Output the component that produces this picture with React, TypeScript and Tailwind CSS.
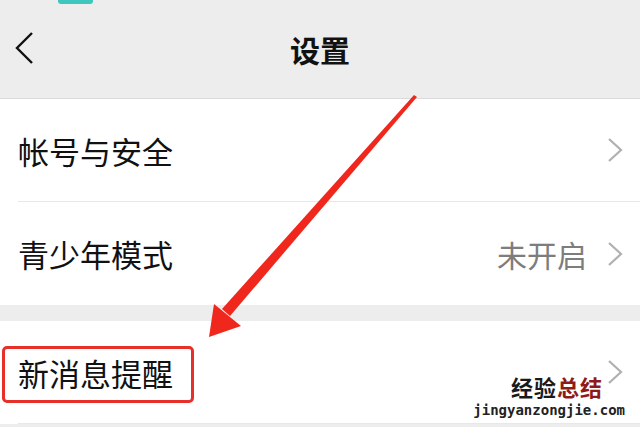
const font = { fontFamily: '"Noto Sans CJK SC", "Noto Sans", sans-serif' }

function Chevron() {
    return (
        <svg width="16" height="26" viewBox="0 0 16 26" className="shrink-0">
            <path d="M2 2 L14 13 L2 24" fill="none" stroke="#b0b0b0" strokeWidth="2.2" />
        </svg>
    )
}

function Row({ label, value, last }: { label: string; value?: string; last?: boolean }) {
    return (
        <div className="h-[103px] bg-white pl-[18px]">
            <div className={`flex h-full items-center pr-[17px] ${last ? '' : 'border-b border-[#e8e8e8]'}`}>
                <span className="flex-1 text-[31px] leading-none text-[#111]">{label}</span>
                {value && <span className="mr-[20px] text-[30px] leading-none text-[#7d7d7d]">{value}</span>}
                <Chevron />
            </div>
        </div>
    )
}

export default function App() {
    return (
        <div className="relative h-[427px] w-[640px] overflow-hidden bg-[#ededed]" style={font}>
            {/* top status bar fragment */}
            <div className="absolute left-[58px] top-0 h-[4px] w-[35px] rounded-b-[3px] bg-[#3fc6bf]" />

            <header className="grid h-[99px] grid-cols-[1fr_auto_1fr] items-center border-b border-[#dadada] px-[15px]">
                <svg width="24" height="34" viewBox="0 0 24 34">
                    <path d="M17 1 L2 16 L17 31" fill="none" stroke="#111" strokeWidth="2.4" />
                </svg>
                <h1 className="text-[30px] font-bold leading-none text-[#111]">设置</h1>
                <div />
            </header>

            <Row label="帐号与安全" />
            <Row label="青少年模式" value="未开启" last />

            <div className="h-[16px]" />

            <div className="relative">
                <Row label="新消息提醒" />
                <div className="absolute left-[2px] top-[25px] h-[57px] w-[192px] rounded-[5px] border-[3px] border-[#e8302b]" />
            </div>

            {/* watermark */}
            <div className="absolute right-[15px] top-[375px] flex flex-col items-end">
                <div className="mr-[22px] text-[22px] font-bold leading-none tracking-[1px]">
                    <span className="text-[#1a1a1a]">经验</span>
                    <span className="text-[#8e1b1b]">总结</span>
                </div>
                <div className="mt-[6px] text-[14px] font-bold leading-none text-[#222]" style={{ fontFamily: '"DejaVu Sans Mono", monospace' }}>
                    jingyanzongjie.com
                </div>
            </div>

            {/* red arrow */}
            <svg className="pointer-events-none absolute left-0 top-0" width="640" height="427">
                <polygon points="414,95 417,97 230,316 222,309" fill="#f0271c" />
                <polygon points="209,337 214,304 241,326" fill="#f0271c" />
            </svg>
        </div>
    )
}
